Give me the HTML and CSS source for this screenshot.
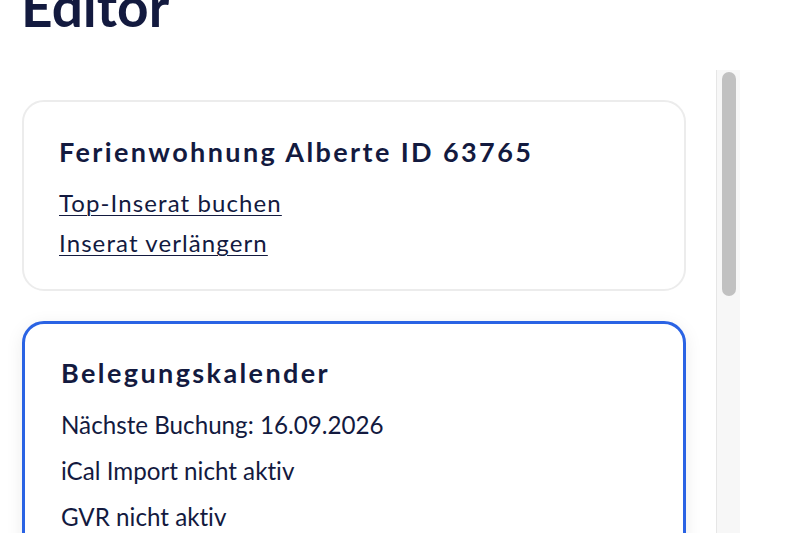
FILE: index.html
```html
<!DOCTYPE html>
<html lang="de">
<head>
<meta charset="utf-8">
<link rel="stylesheet" href="styles.css">
</head>
<body>
<div class="page">
  <h1 class="title">Editor</h1>
  <div class="scroller">
    <div class="content">
      <section class="card">
        <h2 class="card-title">Ferienwohnung Alberte ID 63765</h2>
        <a class="link" href="#">Top-Inserat buchen</a>
        <a class="link" href="#">Inserat verlängern</a>
      </section>
      <section class="card card-active">
        <h2 class="card-title">Belegungskalender</h2>
        <p class="line">Nächste Buchung: 16.09.2026</p>
        <p class="line">iCal Import nicht aktiv</p>
        <p class="line">GVR nicht aktiv</p>
      </section>
    </div>
    <div class="scrollbar"><div class="thumb"></div></div>
  </div>
</div>
</body>
</html>
```
FILE: styles.css
```css
html, body {
  margin: 0;
  padding: 0;
  background: #ffffff;
  overflow: hidden;
}
body {
  font-family: Lato, "Noto Sans", sans-serif;
  color: #131a3f;
  font-variant-ligatures: none;
}
.page {
  width: 800px;
  height: 533px;
  overflow: hidden;
}
.title {
  margin: -22px 0 0 21px;
  font-size: 55px;
  font-weight: 700;
  line-height: 56px;
  color: #131a3f;
}
.scroller {
  display: flex;
  margin-top: 36px;
  height: 600px;
}
.content {
  width: 664px;
  margin-left: 22px;
  margin-right: 30px;
  padding-top: 30px;
  display: flex;
  flex-direction: column;
  gap: 30px;
}
.card {
  border: 2px solid #ececec;
  border-radius: 22px;
  padding: 32px 35px 26px;
  display: flex;
  flex-direction: column;
  align-items: flex-start;
  background: #fff;
}
.card-active {
  border: 3px solid #2a63e4;
  box-shadow: 0 4px 18px rgba(0, 0, 0, 0.08);
  padding: 31px 36px 24px;
}
.card-title {
  margin: 0 0 13px;
  font-size: 27px;
  font-weight: 700;
  letter-spacing: 2.4px;
  line-height: 36px;
}
.card-active .card-title {
  margin-bottom: 11px;
}
.link {
  font-size: 24px;
  line-height: 40px;
  letter-spacing: 1.1px;
  color: #131a3f;
  text-decoration: underline;
  text-decoration-thickness: 1px;
  text-underline-offset: 3px;
}
.line {
  margin: 0;
  font-size: 24.2px;
  line-height: 46px;
}
.scrollbar {
  width: 24px;
  border-left: 1px solid #e6e6e6;
  background: #f7f7f7;
  padding: 2px 5px;
  box-sizing: border-box;
  height: 600px;
}
.thumb {
  width: 14px;
  height: 224px;
  border-radius: 7px;
  background: #c1c1c1;
}
```
